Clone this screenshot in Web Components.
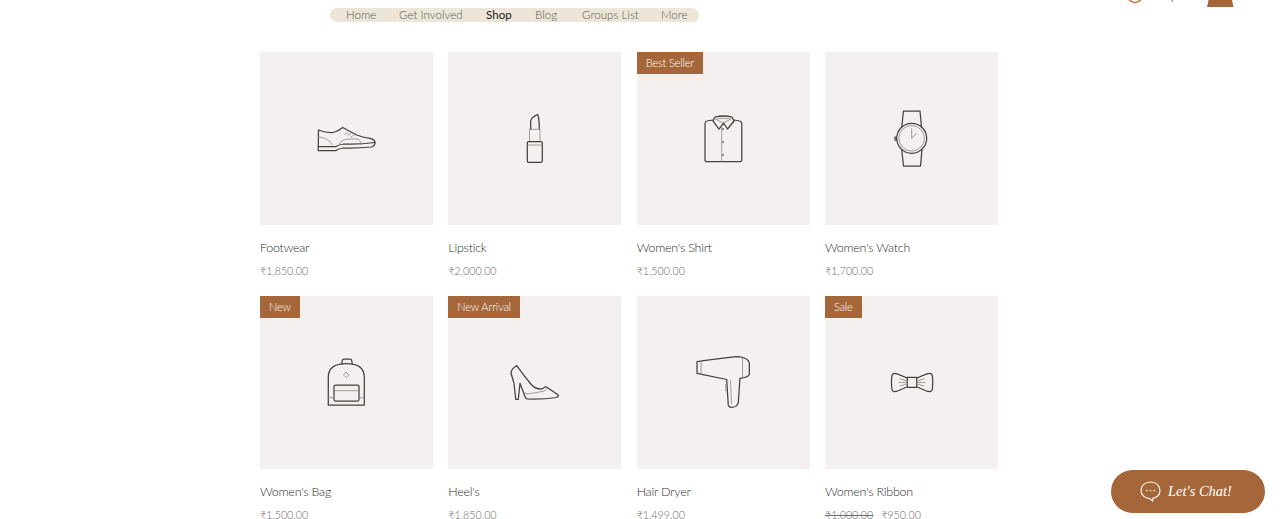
<!DOCTYPE html>
<html>
<head>
<meta charset="utf-8">
<title>Shop</title>
<style>
    html, body {
        margin: 0;
        height: 519px;
        overflow: hidden;
        background: #fff;
        font-family: Lato, "Liberation Sans", sans-serif;
    }
</style>
</head>
<body>
<shop-page>
    <site-header slot="header"></site-header>
    <product-card icon="shoe" name="Footwear" price="₹1,850.00"></product-card>
    <product-card icon="lipstick" name="Lipstick" price="₹2,000.00"></product-card>
    <product-card icon="shirt" name="Women's Shirt" price="₹1,500.00" badge="Best Seller"></product-card>
    <product-card icon="watch" name="Women's Watch" price="₹1,700.00"></product-card>
    <product-card icon="bag" name="Women's Bag" price="₹1,500.00" badge="New"></product-card>
    <product-card icon="heel" name="Heel's" price="₹1,850.00" badge="New Arrival"></product-card>
    <product-card icon="dryer" name="Hair Dryer" price="₹1,499.00"></product-card>
    <product-card icon="bow" name="Women's Ribbon" price="₹950.00" old-price="₹1,000.00" badge="Sale"></product-card>
</shop-page>
<chat-button></chat-button>

<script>
// icon drawings use the 173x173 tile as their viewBox, so they sit where the picture has them
const ICONS = {
    shoe: `
        <path d="M58.5 78 Q66 81 73.3 80.5 Q78 79.5 82.7 75.5 L96.7 83 Q103 85.5 110 86.3 Q115 87.5 115 90.5 Q115 94 111.7 95 Q96 96.5 83.3 96 Q79 96.5 76 98.5 L58.2 98.5 Z"/>
        <path d="M58.3 94.5 L76 94.5 Q79 92.5 84 92 Q100 92.5 115 90.5"/>
        <path class="thin" d="M58.5 85 Q68 85.5 72 92.5 M79 92 Q82 87 90 87 L98 87 Q102 90 101 92.5 M88 80 L85 82 M91 81.5 L88 83.5 M94 83 L91 85"/>`,
    lipstick: `
        <path d="M82.7 77 L82.7 69 Q83 65.5 89.7 62.5 Q91.3 66 91.3 77"/>
        <path class="thin" d="M81.5 77.3 L92 77.3 L92 89.5 M81.5 77.3 L81.5 89.5"/>
        <path d="M79.3 90.5 Q79.3 89.5 80.5 89.5 L93 89.5 Q94.3 89.5 94.3 90.5 L94.3 109 Q94.3 110.3 93 110.3 L80.5 110.3 Q79.3 110.3 79.3 109 Z"/>
        <path class="thin" d="M79.5 93 L94 93"/>`,
    shirt: `
        <path d="M76 68 L70 69 Q68 69.5 68 72 L68 108 Q68 109.7 70 109.7 L103 109.7 Q104.8 109.7 104.8 108 L104.8 72 Q104.8 69.5 102.5 69 L97 68"/>
        <path d="M76 69 L78 65 Q86.5 63 95 65 L97 69 L90.5 77 L86.5 71 L82 77 Z"/>
        <path class="thin" d="M79 67 Q86.5 65.5 94 67 L86.5 71 Z"/>
        <path class="thin" d="M84.7 75 L84.7 109.7"/>
        <circle class="dot" cx="86" cy="77" r="1"/><circle class="dot" cx="86" cy="90" r="1"/><circle class="dot" cx="86" cy="103" r="1"/>`,
    watch: `
        <path d="M76.7 75 L78.5 59 L95 59 L96.5 75"/>
        <path d="M76.7 97.5 L78.5 114 L95.5 114 L97 97.5"/>
        <circle cx="86.7" cy="86.3" r="15"/>
        <circle class="thin" cx="86.7" cy="86.3" r="12.8"/>
        <path class="thin" d="M86.7 76.5 L86.7 86.3 L91.5 81.3"/>
        <path d="M71.5 85 L70 85 L70 88 L71.5 88"/>`,
    bag: `
        <path d="M68.3 109 L68.3 81 Q68.3 67.5 86.3 67.5 Q104.3 67.5 104.3 81 L104.3 109 Z"/>
        <path d="M81.7 68 L82.3 64.5 Q82.5 63 84 63 L90 63 Q91.5 63 91.7 64.5 L92.3 68"/>
        <path class="thin" d="M86.3 76.3 L89 79 L86.3 81.7 L83.6 79 Z"/>
        <rect x="74" y="89" width="25" height="16" rx="1.5"/>
        <path class="thin" d="M74 94.7 L99 94.7 M68.3 101.7 L74 101.7 M99 101.7 L104.3 101.7"/>`,
    heel: `
        <path d="M68.7 69.7 Q63 73 63 77.3 Q64.5 82 66 87.3 L67.7 103.3 L70.3 103.3 L72 87.3 L75.3 96 Q77 102 79 103 Q95 103.5 108.7 101.5 Q111 100 110.3 99 L100 92 L97.5 90.7 L93.7 93 Q87 93 83.7 89 Q76 80 68.7 69.7 Z"/>
        <path class="thin" d="M75.3 96 L79 98 Q90 96.5 96.5 95 L100 92"/>`,
    dryer: `
        <path d="M60 65.7 L60 77.3 L89.7 83.5 L91.3 109.5 Q92 111.3 95 111.3 Q100.5 111 101.3 106.5 L103 82.3 Q111 81.5 112.3 78.5 L112.3 67 Q111.5 62 101.3 60.7 Q96 60.7 60 65.7 Z"/>
        <path class="thin" d="M64 65.2 L64 78.2 M105.5 61.7 L105.5 81.5 M93.5 84.5 L94.5 108"/>
        <path class="thin" d="M89.7 88 L88.8 88 L88.8 95 L90 95"/>`,
    bow: `
        <rect x="82.3" y="81.3" width="9.4" height="10"/>
        <path d="M82.3 82 L72 77.8 Q67.5 76.5 66.8 80 Q66 86 66.8 93 Q67.5 96.5 72 95.2 L82.3 90.8"/>
        <path d="M91.7 82 L102 77.8 Q106.8 76.5 107.4 80 Q108.2 86 107.4 93 Q106.8 96.5 102 95.2 L91.7 90.8"/>
        <path class="thin" d="M75 83 L82 85 M74 86.5 L82 86.5 M75 90 L82 88 M99 83 L92 85 M100 86.5 L92 86.5 M99 90 L92 88"/>`
};

class ShopPage extends HTMLElement {
    constructor() {
        super();
        this.attachShadow({ mode: 'open' });
        this.shadowRoot.innerHTML = `
            <style>
                :host { display: block; }
                .grid {
                    display: grid;
                    grid-template-columns: repeat(4, 173px);
                    column-gap: 15.33px;
                    row-gap: 0;
                    width: 738px;
                    margin-left: 260px;
                }
            </style>
            <slot name="header"></slot>
            <div class="grid"><slot></slot></div>
        `;
    }
}

class SiteHeader extends HTMLElement {
    constructor() {
        super();
        this.attachShadow({ mode: 'open' });
        const items = ['Home', 'Get Involved', 'Shop', 'Blog', 'Groups List', 'More'];
        this.shadowRoot.innerHTML = `
            <style>
                :host {
                    display: flex;
                    height: 52px;
                    position: relative;
                    overflow: hidden;
                }
                nav {
                    display: flex;
                    align-items: center;
                    height: 14px;
                    width: 369px;
                    box-sizing: border-box;
                    margin: 8px 0 0 330px;
                    padding: 0 0 2px 16px;
                    border-radius: 7px;
                    background: #ece5d8;
                    font-size: 11.6px;
                    line-height: 13px;
                    font-weight: 300;
                    color: #5d5a52;
                    white-space: nowrap;
                }
                nav span { flex: none; }
                nav .active { color: #26231f; font-weight: 400; }
                .tools {
                    display: flex;
                    align-items: flex-start;
                    margin-left: 425px;
                }
                .tools svg { display: block; }
            </style>
            <nav>${items.map(i => `<span class="${i === 'Shop' ? 'active' : ''}">${i}</span>`).join('')}</nav>
            <div class="tools">
                <svg width="26" height="8" viewBox="0 0 26 8" style="margin-left:1px"><circle cx="10" cy="-5" r="7.5" fill="none" stroke="#c9703c" stroke-width="1.6"/></svg>
                <svg width="10" height="8" viewBox="0 0 10 8" style="margin-left:16px"><path d="M3 -2 Q6 -1 5 2" fill="none" stroke="#8b8b8b" stroke-width="1.2"/></svg>
                <svg width="28" height="8" viewBox="0 0 28 8" style="margin-left:30px"><path d="M1.5 0 L25 0 L26.5 7 L0 7 Z" fill="#a5673a"/></svg>
            </div>
        `;
        // widths measured off the reference, the substitute font runs a little different
        const widths = [53, 87, 49, 47, 79, 38];
        this.shadowRoot.querySelectorAll('nav span').forEach((s, i) => {
            s.style.width = widths[i] + 'px';
        });
    }
}

class ProductCard extends HTMLElement {
    constructor() {
        super();
        this.attachShadow({ mode: 'open' });
    }

    connectedCallback() {
        const badge = this.getAttribute('badge');
        const oldPrice = this.getAttribute('old-price');
        this.shadowRoot.innerHTML = `
            <style>
                :host {
                    display: block;
                    height: 244px;
                    color: #2f2e2c;
                }
                .tile {
                    position: relative;
                    height: 173px;
                    background: #f3f0ef;
                }
                .tile svg {
                    display: block;
                    width: 173px;
                    height: 173px;
                    fill: none;
                    stroke: #45403e;
                    stroke-width: 1.25;
                    stroke-linejoin: round;
                    stroke-linecap: round;
                }
                .tile .thin { stroke: #8a8583; stroke-width: 0.8; }
                .tile .dot { fill: #6f6a68; stroke: none; }
                .badge {
                    position: absolute;
                    left: 0;
                    top: 0;
                    height: 22px;
                    line-height: 21px;
                    padding: 0 9px;
                    background: #a5673a;
                    color: #fff;
                    font-size: 11px;
                    font-weight: 300;
                    letter-spacing: -0.15px;
                    white-space: nowrap;
                }
                .name {
                    margin-top: 15px;
                    height: 16px;
                    line-height: 16px;
                    font-size: 12.5px;
                    letter-spacing: -0.25px;
                    font-weight: 300;
                }
                .price {
                    margin-top: 7px;
                    height: 16px;
                    line-height: 16px;
                    font-size: 10.7px;
                    font-weight: 300;
                    color: #6d6b68;
                }
                .old { text-decoration: line-through; margin-right: 8px; }
            </style>
            <div class="tile">
                <svg viewBox="0 0 173 173">${ICONS[this.getAttribute('icon')]}</svg>
                ${badge ? `<div class="badge">${badge}</div>` : ''}
            </div>
            <div class="name">${this.getAttribute('name')}</div>
            <div class="price">${oldPrice ? `<span class="old">${oldPrice}</span>` : ''}${this.getAttribute('price')}</div>
        `;
    }
}

class ChatButton extends HTMLElement {
    constructor() {
        super();
        this.attachShadow({ mode: 'open' });
        this.shadowRoot.innerHTML = `
            <style>
                :host {
                    position: fixed;
                    left: 1111px;
                    top: 470px;
                    width: 154px;
                    height: 43px;
                    box-sizing: border-box;
                    padding-left: 29px;
                    display: flex;
                    align-items: center;
                    gap: 7px;
                    border-radius: 22px;
                    background: #a5673a;
                    color: #fff;
                    font: italic 400 14.5px "Liberation Serif", serif;
                }
            </style>
            <svg width="21" height="21" viewBox="0 0 21 21" fill="none" stroke="#fff" stroke-width="1.1">
                <path d="M10.5 1 C5 1 1 4.6 1 9.5 C1 14 4.8 17.3 9.6 17.6 L12.6 20 L12.9 17.4 C17 16.5 20 13.5 20 9.5 C20 4.6 16 1 10.5 1 Z"/>
                <circle cx="6.8" cy="9.6" r="0.8" fill="#fff" stroke="none"/>
                <circle cx="10.5" cy="9.6" r="0.8" fill="#fff" stroke="none"/>
                <circle cx="14.2" cy="9.6" r="0.8" fill="#fff" stroke="none"/>
            </svg>
            <span>Let's Chat!</span>
        `;
    }
}

customElements.define('shop-page', ShopPage);
customElements.define('site-header', SiteHeader);
customElements.define('product-card', ProductCard);
customElements.define('chat-button', ChatButton);
</script>
</body>
</html>
